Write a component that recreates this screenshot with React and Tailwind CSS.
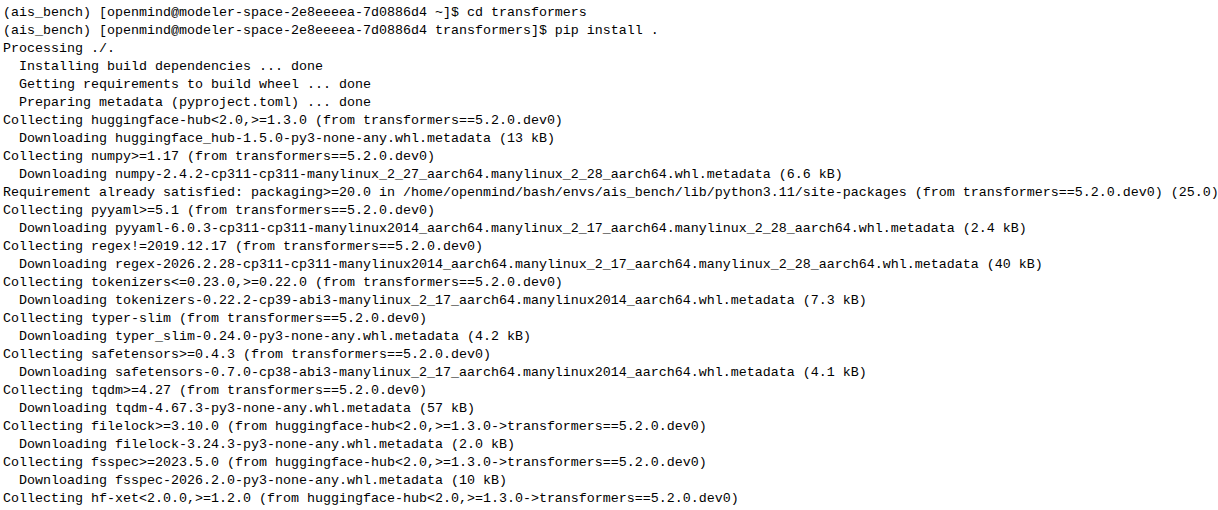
import React from "react";

const lines = [
  "(ais_bench) [openmind@modeler-space-2e8eeeea-7d0886d4 ~]$ cd transformers",
  "(ais_bench) [openmind@modeler-space-2e8eeeea-7d0886d4 transformers]$ pip install .",
  "Processing ./.",
  "  Installing build dependencies ... done",
  "  Getting requirements to build wheel ... done",
  "  Preparing metadata (pyproject.toml) ... done",
  "Collecting huggingface-hub<2.0,>=1.3.0 (from transformers==5.2.0.dev0)",
  "  Downloading huggingface_hub-1.5.0-py3-none-any.whl.metadata (13 kB)",
  "Collecting numpy>=1.17 (from transformers==5.2.0.dev0)",
  "  Downloading numpy-2.4.2-cp311-cp311-manylinux_2_27_aarch64.manylinux_2_28_aarch64.whl.metadata (6.6 kB)",
  "Requirement already satisfied: packaging>=20.0 in /home/openmind/bash/envs/ais_bench/lib/python3.11/site-packages (from transformers==5.2.0.dev0) (25.0)",
  "Collecting pyyaml>=5.1 (from transformers==5.2.0.dev0)",
  "  Downloading pyyaml-6.0.3-cp311-cp311-manylinux2014_aarch64.manylinux_2_17_aarch64.manylinux_2_28_aarch64.whl.metadata (2.4 kB)",
  "Collecting regex!=2019.12.17 (from transformers==5.2.0.dev0)",
  "  Downloading regex-2026.2.28-cp311-cp311-manylinux2014_aarch64.manylinux_2_17_aarch64.manylinux_2_28_aarch64.whl.metadata (40 kB)",
  "Collecting tokenizers<=0.23.0,>=0.22.0 (from transformers==5.2.0.dev0)",
  "  Downloading tokenizers-0.22.2-cp39-abi3-manylinux_2_17_aarch64.manylinux2014_aarch64.whl.metadata (7.3 kB)",
  "Collecting typer-slim (from transformers==5.2.0.dev0)",
  "  Downloading typer_slim-0.24.0-py3-none-any.whl.metadata (4.2 kB)",
  "Collecting safetensors>=0.4.3 (from transformers==5.2.0.dev0)",
  "  Downloading safetensors-0.7.0-cp38-abi3-manylinux_2_17_aarch64.manylinux2014_aarch64.whl.metadata (4.1 kB)",
  "Collecting tqdm>=4.27 (from transformers==5.2.0.dev0)",
  "  Downloading tqdm-4.67.3-py3-none-any.whl.metadata (57 kB)",
  "Collecting filelock>=3.10.0 (from huggingface-hub<2.0,>=1.3.0->transformers==5.2.0.dev0)",
  "  Downloading filelock-3.24.3-py3-none-any.whl.metadata (2.0 kB)",
  "Collecting fsspec>=2023.5.0 (from huggingface-hub<2.0,>=1.3.0->transformers==5.2.0.dev0)",
  "  Downloading fsspec-2026.2.0-py3-none-any.whl.metadata (10 kB)",
  "Collecting hf-xet<2.0.0,>=1.2.0 (from huggingface-hub<2.0,>=1.3.0->transformers==5.2.0.dev0)",
];

export default function App() {
  return (
    <div className="w-[1218px] h-[510px] overflow-hidden bg-white text-black pl-[3px] pt-[4px] font-['Liberation_Mono',monospace] text-[13.33px] leading-[18px]">
      {lines.map((line, i) => (
        <div key={i} className="whitespace-pre">
          {line}
        </div>
      ))}
    </div>
  );
}
